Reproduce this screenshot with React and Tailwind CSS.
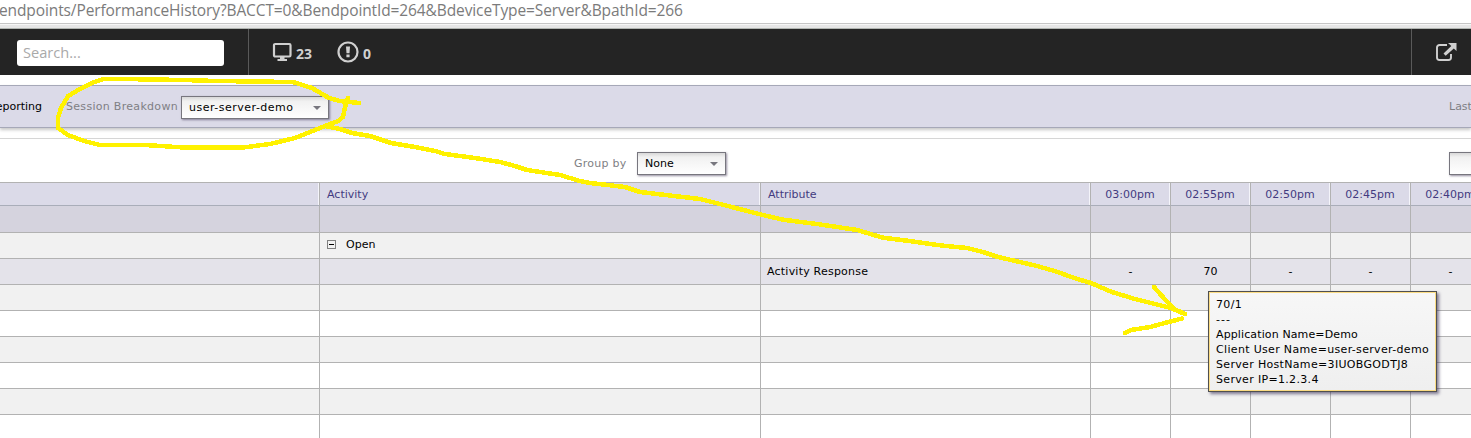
const times = ['03:00pm', '02:55pm', '02:50pm', '02:45pm', '02:40pm'];

const rows = [
  { bg: 'bg-[#d5d3de]', height: 'h-[27px]' },
  { bg: 'bg-[#f1f1f1]', height: 'h-[26px]', activity: 'Open' },
  {
    bg: 'bg-[#e4e3ea]',
    height: 'h-[26px]',
    attribute: 'Activity Response',
    values: ['-', '70', '-', '-', '-'],
  },
  { bg: 'bg-[#f1f1f1]', height: 'h-[26px]' },
  { bg: 'bg-white', height: 'h-[26px]' },
  { bg: 'bg-[#f1f1f1]', height: 'h-[26px]' },
  { bg: 'bg-white', height: 'h-[26px]' },
  { bg: 'bg-[#f1f1f1]', height: 'h-[26px]' },
  { bg: 'bg-white', height: 'h-[26px]' },
];

const columns =
  'grid grid-cols-[319px_441px_330px_80px_80px_80px_80px_80px] w-[1490px]';

function Select({ label, width }) {
  return (
    <div
      className={`flex h-[23px] shrink-0 items-center justify-between border border-[#77767e] bg-gradient-to-b from-[#d8d8d8] via-[#f1f1f1] via-20% to-white pl-[7px] pr-[7px] text-black shadow-[1px_1px_2px_rgba(60,50,80,0.55)] ${width}`}
    >
      <span>{label}</span>
      {label && (
        <svg width="8" height="4" viewBox="0 0 8 4" className="mt-px">
          <path d="M0 0H8L4 4Z" fill="#77767e" />
        </svg>
      )}
    </div>
  );
}

function HeaderCell({ children, center }) {
  return (
    <div
      className={`flex h-[23px] items-center border-b border-l border-b-[#a9adb9] border-l-[#b2b2b2] text-[#433a80] shadow-[inset_-1px_0_0_#f4f4fa] ${center ? 'justify-center pr-px' : 'pl-[7px]'}`}
    >
      {children}
    </div>
  );
}

function TopBar() {
  return (
    <header className="flex h-[46px] bg-[#242424] font-['Open_Sans',sans-serif] text-[#d0d0d0]">
      <div className="flex w-[249px] items-center border-r border-[#5a5a5a] pl-[17px] pt-[2px]">
        <div className="flex h-[26px] w-[207px] items-center rounded-[3px] bg-white pb-px pl-[6px] text-[14.6px] text-[#a9a9a9]">
          Search...
        </div>
      </div>
      <div className="flex flex-1 items-center text-[14px] font-bold">
        <svg width="20" height="20" viewBox="0 0 20 20" className="ml-[23px]">
          <rect x="2" y="2" width="16.500" height="12.500" rx="1.200" fill="none" stroke="#d0d0d0" strokeWidth="2.200" />
          <path d="M8 14h4.500v3H8zM5.500 17h9.500v2H5.500z" fill="#d0d0d0" />
        </svg>
        <span className="ml-[4px] mt-[2px]">23</span>
        <svg width="22" height="22" viewBox="0 0 22 22" className="ml-[25px]">
          <circle cx="11" cy="11" r="9.500" fill="none" stroke="#d0d0d0" strokeWidth="2.200" />
          <path d="M9 5.500h4l-.5 6.800H9.500zM9.400 13.500h3.200v2.800H9.400z" fill="#d0d0d0" />
        </svg>
        <span className="ml-[4px] mt-[2px]">0</span>
      </div>
      <div className="flex w-[60px] items-center border-l border-[#5a5a5a] pl-[23px]">
        <svg width="22" height="20" viewBox="0 0 22 20">
          <path d="M12 3H4.500A2.500 2.500 0 0 0 2 5.500v10A2.500 2.500 0 0 0 4.500 18h9a2.500 2.500 0 0 0 2.500-2.500V12" fill="none" stroke="#d0d0d0" strokeWidth="1.900" />
          <path d="M13 1H21.500v8l-2.700-2.600-8.100 7.400-2.200-2.200 7.800-7.700z" fill="#d0d0d0" />
        </svg>
      </div>
    </header>
  );
}

function Tooltip() {
  return (
    <div className="absolute left-[1208px] top-[291px] h-[101px] w-[229px] border border-[#4f4f4f] shadow-[2px_2px_3px_rgba(50,40,80,0.6)]">
      <div className="h-full whitespace-nowrap border border-[#fbdc84] bg-gradient-to-b from-[#f7f7f7] to-[#efefef] pl-[6px] pt-[4px] leading-[15px] tracking-[0.33px] text-black">
        <div>70/1</div>
        <div className="tracking-[1px]">---</div>
        <div className="tracking-[0.12px]">Application Name=Demo</div>
        <div>Client User Name=user-server-demo</div>
        <div>Server HostName=3IUOBGODTJ8</div>
        <div>Server IP=1.2.3.4</div>
      </div>
    </div>
  );
}

function Marker() {
  return (
    <svg
      className="pointer-events-none absolute left-0 top-0"
      width="1471"
      height="438"
      viewBox="0 0 1471 438"
      fill="none"
      stroke="#fff200"
      strokeWidth="4.500"
      strokeLinecap="round"
      strokeLinejoin="round"
      shapeRendering="crispEdges"
    >
      <path d="M359 103L340 101L329 98L312 88L293 82L216 81L184 80L122 79H103L92 83L80 89L68 96L61 108L58 118V128L68 135L84 141L100 145H145L184 147.500H243L270 144L295 138L325 126L338 121L343 117L345 107L348 98" />
      <path d="M325 126L340 129L352 133L370 136L391 143L415 147L435 151L445 154L475 158L500 162L515 166L527 170L560 175L580 181L590 183L625 187L640 192L700 199L720 204L750 211.700L763 215L783 219.700L817 224L857 230L883 237.700L907 240.700L943 245.700L967 248L983 252L997 256.700L1037 266L1057 271.700L1074 278L1091 283L1111 291.700L1134 298.700L1151 303L1171 308L1185 314" />
      <path d="M1154 287L1161 295L1174 309L1185 314" />
      <path d="M1182 318.500L1161 324L1150 327L1131 330L1125 333" />
    </svg>
  );
}

export default function App() {
  return (
    <div className="relative h-[438px] w-[1471px] overflow-hidden bg-white font-['DejaVu_Sans',sans-serif] text-[11px] leading-[15px] tracking-normal">
      <div className="h-[23px] whitespace-nowrap font-['Open_Sans',sans-serif] text-[15.5px] leading-[20px] tracking-[-0.11px] text-[#7b7b7b]">
        <span className="-ml-px">endpoints/PerformanceHistory?BACCT=0&amp;BendpointId=264&amp;BdeviceType=Server&amp;BpathId=266</span>
      </div>
      <div className="h-[6px] border-b border-t border-b-[#b0b4b0] border-t-[#c6c6c6] bg-[#e6e6e6] shadow-[inset_0_1px_0_#f6f6f6]" />
      <TopBar />

      <div className="mt-[10px] flex h-[43px] items-center border-y border-[#a6a8b8] bg-[#dbdae8] shadow-[0_2px_3px_rgba(0,0,0,0.22)]">
        <div className="flex w-[42px] justify-end text-black">
          <span>Reporting</span>
        </div>
        <span className="ml-[24px] w-[115px] whitespace-nowrap tracking-[0.3px] text-[#7f7f84]">Session Breakdown</span>
        <div className="tracking-[0.5px]">
          <Select label="user-server-demo" width="w-[148px] mt-px" />
        </div>
        <span className="ml-auto w-[22px] whitespace-nowrap text-[#7f7f84]">Last</span>
      </div>

      <div className="mt-[10px] flex h-[44px] items-center border-t border-[#d6d6d6] pt-[5px]">
        <span className="ml-[574px] w-[63px] tracking-[0.24px] text-[#7f7f84]">Group by</span>
        <Select label="None" width="w-[89px]" />
        <div className="ml-auto">
          <Select label="" width="w-[40px] -mr-[18px]" />
        </div>
      </div>

      <div className="border-t border-[#b2b2b2]">
        <div className={`${columns} bg-[#dbdae8]`}>
          <div className="h-[23px] border-b border-[#a9adb9] shadow-[inset_-1px_0_0_#f4f4fa]" />
          <HeaderCell>Activity</HeaderCell>
          <HeaderCell>Attribute</HeaderCell>
          {times.map((t) => (
            <HeaderCell key={t} center>{t}</HeaderCell>
          ))}
        </div>
        {rows.map((row, i) => (
          <div key={i} className={`${columns} ${row.bg} ${row.height} text-black`}>
            <div className="border-b border-[#b2b2b2]" />
            <div className="flex items-center border-b border-l border-[#b2b2b2] pb-[3px] pl-[7px]">
              {row.activity && (
                <>
                  <span className="flex h-[9px] w-[9px] items-center justify-center border border-[#808080]">
                    <span className="h-px w-[5px] bg-black" />
                  </span>
                  <span className="ml-[10px]">{row.activity}</span>
                </>
              )}
            </div>
            <div className="flex items-center border-b border-l border-[#b2b2b2] pl-[6px] tracking-[0.22px]">{row.attribute}</div>
            {times.map((t, c) => (
              <div key={t} className="flex items-center justify-center border-b border-l border-[#b2b2b2]">
                {row.values?.[c]}
              </div>
            ))}
          </div>
        ))}
      </div>

      <Marker />
      <Tooltip />
    </div>
  );
}
